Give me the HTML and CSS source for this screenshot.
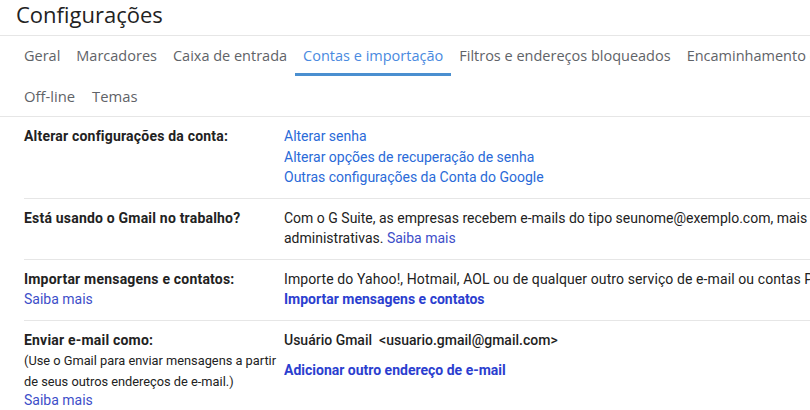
FILE: index.html
```html
<!DOCTYPE html>
<html lang="pt-BR">
<head>
<meta charset="utf-8">
<title>Configurações</title>
<link rel="stylesheet" href="styles.css">
</head>
<body>
<div class="page">
  <header class="title-bar">
    <h1 class="title">Configurações</h1>
  </header>
  <nav class="tabs">
    <div class="tab-row">
      <a class="tab">Geral</a>
      <a class="tab">Marcadores</a>
      <a class="tab">Caixa de entrada</a>
      <a class="tab active">Contas e importação</a>
      <a class="tab">Filtros e endereços bloqueados</a>
      <a class="tab">Encaminhamento e POP/IMAP</a>
    </div>
    <div class="tab-row">
      <a class="tab">Off-line</a>
      <a class="tab">Temas</a>
    </div>
  </nav>
  <section class="settings">
    <div class="row">
      <div class="label"><span class="label-title">Alterar configurações da conta:</span></div>
      <div class="value">
        <a class="link">Alterar senha</a>
        <a class="link">Alterar opções de recuperação de senha</a>
        <a class="link">Outras configurações da Conta do Google</a>
      </div>
    </div>
    <div class="row">
      <div class="label"><span class="label-title">Está usando o Gmail no trabalho?</span></div>
      <div class="value">
        <p class="text">Com o G Suite, as empresas recebem e-mails do tipo seunome@exemplo.com, mais armazenamento e ferramentas<br>administrativas. <a class="link-alt">Saiba mais</a></p>
      </div>
    </div>
    <div class="row">
      <div class="label">
        <span class="label-title">Importar mensagens e contatos:</span>
        <a class="link-alt">Saiba mais</a>
      </div>
      <div class="value">
        <p class="text wide">Importe do Yahoo!, Hotmail, AOL ou de qualquer outro serviço de e-mail ou contas POP3.</p>
        <a class="link-bold">Importar mensagens e contatos</a>
      </div>
    </div>
    <div class="row">
      <div class="label">
        <span class="label-title">Enviar e-mail como:</span>
        <span class="label-note">(Use o Gmail para enviar mensagens a partir<br>de seus outros endereços de e-mail.)</span>
        <a class="link-alt short">Saiba mais</a>
      </div>
      <div class="value">
        <p class="text account"><span class="account-name">Usuário Gmail</span>&lt;usuario.gmail@gmail.com&gt;</p>
        <a class="link-bold add">Adicionar outro endereço de e-mail</a>
      </div>
    </div>
  </section>
</div>
</body>
</html>
```

FILE: styles.css
```css
html, body {
  margin: 0;
  padding: 0;
  background: #ffffff;
  overflow: hidden;
}
body {
  width: 810px;
  height: 410px;
  font-family: Roboto, "Liberation Sans", Arial, sans-serif;
  color: #222222;
}
.page {
  width: 810px;
  overflow: hidden;
}
.title-bar {
  height: 36px;
  border-bottom: 1px solid #e6e6e6;
  box-sizing: border-box;
  padding-left: 16px;
}
.title {
  margin: 0;
  font-family: "Open Sans", sans-serif;
  font-weight: 400;
  font-size: 22px;
  line-height: 29px;
  color: #222222;
}
.tabs {
  padding-left: 16px;
  border-bottom: 1px solid #e6e6e6;
}
.tab-row {
  display: flex;
  white-space: nowrap;
  height: 40px;
  overflow: hidden;
}
.tab {
  display: block;
  flex: none;
  padding: 0 8px;
  height: 40px;
  line-height: 40px;
  box-sizing: border-box;
  font-family: "Open Sans", sans-serif;
  font-size: 14.5px;
  font-weight: 500;
  color: #5f6368;
}
.tab-row + .tab-row .tab {
  padding: 0 9px 0 8px;
  font-size: 14.8px;
}
.tab.active {
  color: #4a8ae0;
  border-bottom: 3px solid #4a8fd0;
}
.settings {
  padding-left: 24px;
}
.row {
  display: flex;
  border-bottom: 1px solid #e6e6e6;
  padding: 9px 0 10px;
  font-size: 14px;
  line-height: 20.5px;
}
.label {
  width: 260px;
  flex: none;
  display: flex;
  flex-direction: column;
}
.label-title {
  font-weight: 700;
  letter-spacing: 0.2px;
  color: #222222;
}
.label-note {
  font-size: 12.8px;
  line-height: 21px;
  color: #222222;
  white-space: nowrap;
}
.value {
  display: flex;
  flex-direction: column;
  white-space: nowrap;
  overflow: hidden;
}
.text {
  margin: 0;
  white-space: nowrap;
}
.text.wide {
  letter-spacing: 0.1px;
}
.link {
  color: #2a6ad8;
}
.link-alt {
  color: #3d4ec9;
}
.link-alt.short {
  line-height: 16px;
}
.link-bold {
  color: #2b3ecf;
  font-weight: 700;
}
.account {
  margin-bottom: 10px;
  font-weight: 500;
  color: #1f1f1f;
}
.account-name {
  margin-right: 7px;
}
.add {
  line-height: 20px;
}
```
